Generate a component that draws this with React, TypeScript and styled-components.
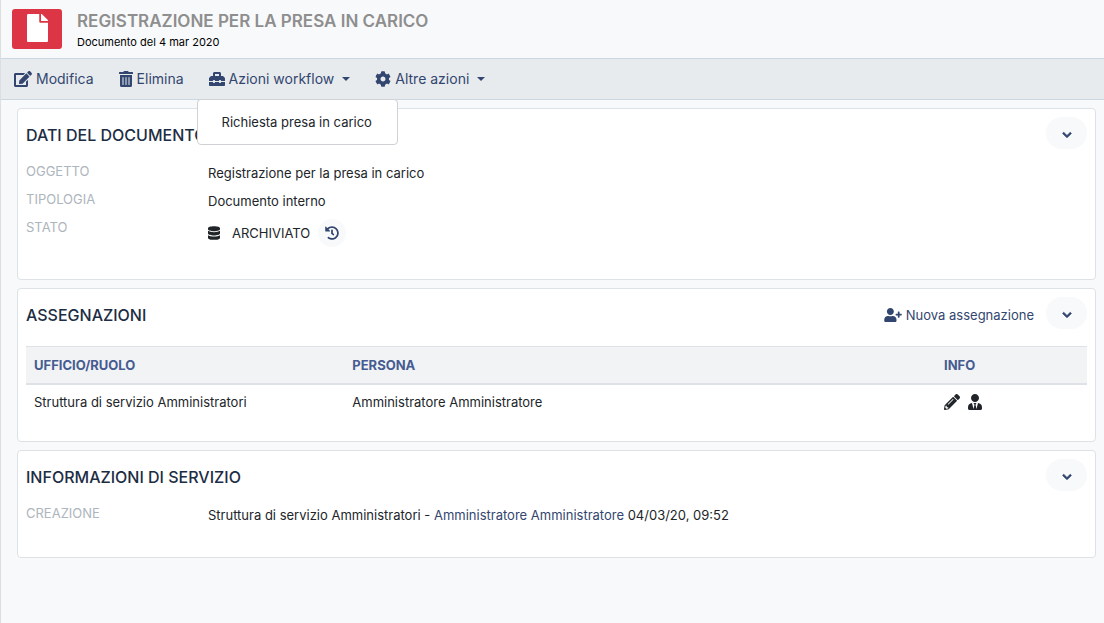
import React from "react";
import styled, { createGlobalStyle } from "styled-components";
import {
  FaChevronDown,
  FaCog,
  FaDatabase,
  FaEdit,
  FaFile,
  FaHistory,
  FaPencilAlt,
  FaToolbox,
  FaTrashAlt,
  FaUserPlus,
  FaUserTie,
} from "react-icons/fa";

const GlobalStyle = createGlobalStyle`
  *, *::before, *::after { box-sizing: border-box; }
  body {
    margin: 0;
    background: #f8f9fb;
    color: #212529;
    font-family: Inter, "Liberation Sans", sans-serif;
    font-size: 14px;
    line-height: 20px;
  }
  button { font: inherit; border: 0; padding: 0; background: none; cursor: pointer; }
  h1, h2, p, dl, dd, ul { margin: 0; padding: 0; }
`;

const Icon = styled.span<{ $width: number; $height: number }>`
  flex: none;
  display: block;
  width: ${(p) => p.$width}px;
  height: ${(p) => p.$height}px;

  svg {
    display: block;
    width: 100%;
    height: 100%;
  }
`;

const Page = styled.div`
  min-height: 100vh;
  border-left: 1px solid #dcdee2;
`;

const Header = styled.header`
  display: flex;
  align-items: center;
  gap: 15px;
  height: 58px;
  padding: 0 11px;
`;

const DocumentBadge = styled.div`
  display: flex;
  justify-content: center;
  width: 50px;
  height: 40px;
  padding-top: 5px;
  border-radius: 3px;
  background: #dc3545;
  color: #fff;
`;

const DocumentTitle = styled.h1`
  color: #8e8e8e;
  font-size: 17px;
  font-weight: 600;
  line-height: 26px;
`;

const DocumentDate = styled.p`
  color: #000;
  font-size: 11px;
  line-height: 16px;
`;

const Toolbar = styled.nav`
  display: flex;
  align-items: center;
  gap: 25px;
  height: 42px;
  padding: 0 13px;
  border-top: 1px solid #cbd8e1;
  border-bottom: 1px solid #cbd8e1;
  background: #e7ebee;
`;

const ActionButton = styled.button`
  display: flex;
  align-items: center;
  gap: 4px;
  color: #33466f;
  white-space: nowrap;
`;

const CardAction = styled(ActionButton)`
  padding-top: 4px;
  font-size: 13px;
`;

const Caret = styled.span`
  margin-left: 4px;
  border-top: 4px solid currentColor;
  border-left: 4px solid transparent;
  border-right: 4px solid transparent;
`;

const MenuAnchor = styled.div`
  position: relative;
`;

const Menu = styled.ul`
  position: absolute;
  top: 30px;
  left: -12px;
  z-index: 2;
  min-width: 201px;
  padding: 8px 0;
  border: 1px solid #cfd1d4;
  border-radius: 4px;
  background: #fff;
  list-style: none;
`;

const MenuItem = styled.button`
  width: 100%;
  padding: 4px 24px;
  color: #212529;
  font-size: 13px;
  text-align: left;
  white-space: nowrap;
`;

const Content = styled.main`
  display: flex;
  flex-direction: column;
  gap: 8px;
  padding: 8px 8px 8px 16px;
`;

const Card = styled.section`
  padding: 8px 8px 22px;
  border: 1px solid #dee2e6;
  border-radius: 4px;
  background: #fff;
`;

const CardHeader = styled.div`
  display: flex;
  align-items: flex-start;
  justify-content: space-between;
`;

const CardTitle = styled.h2`
  padding-top: 6px;
  color: #1c2d44;
  font-size: 16px;
  font-weight: 500;
  line-height: 24px;
`;

const HeaderActions = styled.div`
  display: flex;
  align-items: center;
  gap: 12px;
`;

const CollapseButton = styled.button`
  display: flex;
  align-items: center;
  justify-content: center;
  width: 41px;
  height: 32px;
  padding-top: 4px;
  border-radius: 16px;
  background: #f8f9fb;
  color: #33466f;
`;

const Fields = styled.dl`
  display: grid;
  grid-template-columns: 182px 1fr;
  row-gap: 6px;
  padding: 12px 0 10px;
`;

const FieldName = styled.dt`
  color: #adb5bd;
  font-size: 13px;
`;

const FieldValue = styled.dd`
  display: flex;
  align-items: center;
  color: #212529;
  font-size: 13px;
  padding-top: 2px;
`;

const Status = styled.span`
  margin: 0 8px 0 12px;
`;

const HistoryButton = styled.button`
  display: flex;
  align-items: center;
  justify-content: center;
  width: 28px;
  height: 28px;
  border-radius: 14px;
  background: #f8f9fb;
  color: #33466f;
`;

const PersonLink = styled.a`
  color: #33466f;
  text-decoration: none;
`;

const Table = styled.table`
  width: 100%;
  margin-top: 17px;
  border-collapse: collapse;
  table-layout: fixed;
  text-align: left;
`;

const HeadCell = styled.th<{ $width: string }>`
  width: ${(p) => p.$width};
  padding: 8px;
  border-top: 1px solid #dee2e6;
  border-bottom: 2px solid #dee2e6;
  background: #f2f3f5;
  color: #455b91;
  font-size: 13px;
  font-weight: 700;
  line-height: 20px;
`;

const Cell = styled.td`
  padding: 8px;
  font-size: 13px;
  line-height: 18px;
`;

const InfoIcons = styled.div`
  display: flex;
  gap: 8px;
`;

function Collapse({ label }: { label: string }) {
  return (
    <CollapseButton aria-label={`Comprimi ${label}`}>
      <Icon $width={10} $height={10}>
        <FaChevronDown stroke="currentColor" strokeWidth={40} />
      </Icon>
    </CollapseButton>
  );
}

export default function App() {
  return (
    <Page>
      <GlobalStyle />
      <Header>
        <DocumentBadge>
          <Icon $width={21} $height={28}>
            <FaFile />
          </Icon>
        </DocumentBadge>
        <div>
          <DocumentTitle>REGISTRAZIONE PER LA PRESA IN CARICO</DocumentTitle>
          <DocumentDate>Documento del 4 mar 2020</DocumentDate>
        </div>
      </Header>
      <Toolbar>
        <ActionButton>
          <Icon $width={18} $height={16}>
            <FaEdit />
          </Icon>
          Modifica
        </ActionButton>
        <ActionButton>
          <Icon $width={14} $height={16}>
            <FaTrashAlt />
          </Icon>
          Elimina
        </ActionButton>
        <MenuAnchor>
          <ActionButton aria-haspopup="menu" aria-expanded="true">
            <Icon $width={16} $height={16}>
              <FaToolbox />
            </Icon>
            Azioni workflow
            <Caret />
          </ActionButton>
          <Menu>
            <li>
              <MenuItem>Richiesta presa in carico</MenuItem>
            </li>
          </Menu>
        </MenuAnchor>
        <ActionButton aria-haspopup="menu">
          <Icon $width={16} $height={16}>
            <FaCog />
          </Icon>
          Altre azioni
          <Caret />
        </ActionButton>
      </Toolbar>
      <Content>
        <Card>
          <CardHeader>
            <CardTitle>DATI DEL DOCUMENTO</CardTitle>
            <Collapse label="dati del documento" />
          </CardHeader>
          <Fields>
            <FieldName>OGGETTO</FieldName>
            <FieldValue>Registrazione per la presa in carico</FieldValue>
            <FieldName>TIPOLOGIA</FieldName>
            <FieldValue>Documento interno</FieldValue>
            <FieldName>STATO</FieldName>
            <FieldValue>
              <Icon $width={12} $height={14}>
                <FaDatabase />
              </Icon>
              <Status>ARCHIVIATO</Status>
              <HistoryButton aria-label="Cronologia">
                <Icon $width={14} $height={14}>
                  <FaHistory />
                </Icon>
              </HistoryButton>
            </FieldValue>
          </Fields>
        </Card>
        <Card>
          <CardHeader>
            <CardTitle>ASSEGNAZIONI</CardTitle>
            <HeaderActions>
              <CardAction>
                <Icon $width={18} $height={14}>
                  <FaUserPlus />
                </Icon>
                Nuova assegnazione
              </CardAction>
              <Collapse label="assegnazioni" />
            </HeaderActions>
          </CardHeader>
          <Table>
            <thead>
              <tr>
                <HeadCell $width="30%">UFFICIO/RUOLO</HeadCell>
                <HeadCell $width="auto">PERSONA</HeadCell>
                <HeadCell $width="151px">INFO</HeadCell>
              </tr>
            </thead>
            <tbody>
              <tr>
                <Cell>Struttura di servizio Amministratori</Cell>
                <Cell>Amministratore Amministratore</Cell>
                <Cell>
                  <InfoIcons>
                    <Icon $width={16} $height={16}>
                      <FaPencilAlt />
                    </Icon>
                    <Icon $width={14} $height={16}>
                      <FaUserTie />
                    </Icon>
                  </InfoIcons>
                </Cell>
              </tr>
            </tbody>
          </Table>
        </Card>
        <Card>
          <CardHeader>
            <CardTitle>INFORMAZIONI DI SERVIZIO</CardTitle>
            <Collapse label="informazioni di servizio" />
          </CardHeader>
          <Fields>
            <FieldName>CREAZIONE</FieldName>
            <FieldValue>
              <span>
                Struttura di servizio Amministratori -{" "}
                <PersonLink href="#persona">Amministratore Amministratore</PersonLink> 04/03/20, 09:52
              </span>
            </FieldValue>
          </Fields>
        </Card>
      </Content>
    </Page>
  );
}
